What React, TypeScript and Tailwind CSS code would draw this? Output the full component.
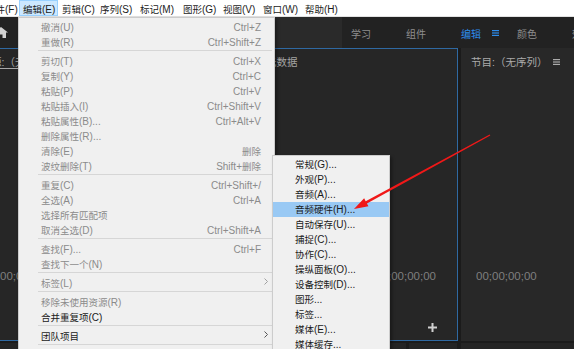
import React from 'react';

const FC = "font-['Noto_Sans_CJK_SC',sans-serif]";
const FL = "font-['Liberation_Sans',sans-serif]";
const RE = /[\u2e80-\u9fff\uff00-\uffef]+|[^\u2e80-\u9fff\uff00-\uffef]+/g;
const CJK = /[\u2e80-\u9fff\uff00-\uffef]/;

function Txt({ s, c = 'text-[9.5px]', l = 'text-[10px]' }: { s: string; c?: string; l?: string }) {
  const parts = s.match(RE) || [];
  return (
    <>
      {parts.map((p, i) => (
        <span key={i} className={CJK.test(p) ? c + ' ' + FC : l + ' ' + FL}>
          {p}
        </span>
      ))}
    </>
  );
}

type Item = { l: string; s?: string; en?: boolean; sub?: boolean } | 'sep';

const mainItems: Item[] = [
  { l: '撤消(U)', s: 'Ctrl+Z' },
  { l: '重做(R)', s: 'Ctrl+Shift+Z' },
  'sep',
  { l: '剪切(T)', s: 'Ctrl+X' },
  { l: '复制(Y)', s: 'Ctrl+C' },
  { l: '粘贴(P)', s: 'Ctrl+V' },
  { l: '粘贴插入(I)', s: 'Ctrl+Shift+V' },
  { l: '粘贴属性(B)...', s: 'Ctrl+Alt+V' },
  { l: '删除属性(R)...' },
  { l: '清除(E)', s: '删除' },
  { l: '波纹删除(T)', s: 'Shift+删除' },
  'sep',
  { l: '重复(C)', s: 'Ctrl+Shift+/' },
  { l: '全选(A)', s: 'Ctrl+A' },
  { l: '选择所有匹配项' },
  { l: '取消全选(D)', s: 'Ctrl+Shift+A' },
  'sep',
  { l: '查找(F)...', s: 'Ctrl+F' },
  { l: '查找下一个(N)' },
  'sep',
  { l: '标签(L)', sub: true },
  'sep',
  { l: '移除未使用资源(R)' },
  { l: '合并重复项(C)', en: true },
  'sep',
  { l: '团队项目', en: true, sub: true },
  'sep',
  { l: '键盘快捷键(K)...', en: true },
];

const subItems = [
  '常规(G)...',
  '外观(P)...',
  '音频(A)...',
  '音频硬件(H)...',
  '自动保存(U)...',
  '捕捉(C)...',
  '协作(C)...',
  '操纵面板(O)...',
  '设备控制(D)...',
  '图形...',
  '标签...',
  '媒体(E)...',
  '媒体缓存...',
  '内存(Y)...',
];

const menubar = [
  { t: '编辑(E)', w: 'w-[39px] pl-[3px]', hi: true },
  { t: '剪辑(C)', w: 'w-[38px] pl-[4px]' },
  { t: '序列(S)', w: 'w-[40px] pl-[4px]' },
  { t: '标记(M)', w: 'w-[43px] pl-[4px]' },
  { t: '图形(G)', w: 'w-[40px] pl-[4px]' },
  { t: '视图(V)', w: 'w-[40px] pl-[4px]' },
  { t: '窗口(W)', w: 'w-[42px] pl-[4px]' },
  { t: '帮助(H)', w: 'w-[40px] pl-[4px]' },
];

function Chevron({ color }: { color: string }) {
  return (
    <svg width="4" height="7" viewBox="0 0 4 7" className="block">
      <path d="M0.5 0.5 L3.5 3.5 L0.5 6.5" fill="none" stroke={color} strokeWidth="1" />
    </svg>
  );
}

function Hamburger({ color }: { color: string }) {
  return (
    <svg width="7" height="6" viewBox="0 0 7 6" className="block">
      <rect x="0" y="0" width="7" height="1.2" fill={color} />
      <rect x="0" y="2.4" width="7" height="1.2" fill={color} />
      <rect x="0" y="4.8" width="7" height="1.2" fill={color} />
    </svg>
  );
}

export default function App() {
  return (
    <div className="relative w-[574px] h-[349px] overflow-hidden bg-[#1b1b1b] font-['Liberation_Sans','Noto_Sans_CJK_SC',sans-serif]">
      {/* Menubar */}
      <div className="flex h-[17px] bg-white border-b border-[#e2e2e2] text-[#1b1b1b] leading-none">
        <div className="h-[16px] w-[19px] shrink-0 flex items-center">
          <span className="whitespace-nowrap ml-[-14px]">
            <Txt s="文件(F)" />
          </span>
        </div>
        {menubar.map((m, i) => (
          <div
            key={i}
            className={
              'h-[16px] flex items-center shrink-0 ' +
              m.w +
              (m.hi ? ' bg-[#cce8ff] border border-[#99d1ff]' : '')
            }
          >
            <span className="whitespace-nowrap">
              <Txt s={m.t} />
            </span>
          </div>
        ))}
      </div>

      {/* Header tab bar */}
      <div className="flex h-[31px]">
        <div className="w-[250px] shrink-0 bg-[#232323] flex items-center">
          <svg width="14" height="11" viewBox="0 0 14 11" className="ml-[-6px] block">
            <path d="M7 0 L14 5.5 L12 5.5 L12 11 L8.5 11 L8.5 7.5 L5.5 7.5 L5.5 11 L2 11 L2 5.5 L0 5.5 Z" fill="#d2d2d2" />
          </svg>
        </div>
        <div className="w-[92px] shrink-0 bg-[#2a2a2a]" />
        <div className="flex-1 min-w-0 overflow-hidden bg-[#222222] flex items-center text-[#8e8e8e] whitespace-nowrap leading-none">
          <span className="ml-[9px] shrink-0"><Txt s="学习" c="text-[10px]" /></span>
          <span className="ml-[35px] shrink-0"><Txt s="组件" c="text-[10px]" /></span>
          <span className="ml-[35px] shrink-0 text-[#2d8ceb]"><Txt s="编辑" c="text-[10px]" /></span>
          <span className="ml-[11px] shrink-0"><Hamburger color="#2d8ceb" /></span>
          <span className="ml-[18px] shrink-0"><Txt s="颜色" c="text-[10px]" /></span>
          <span className="ml-[35px] shrink-0"><Txt s="效果" c="text-[10px]" /></span>
        </div>
      </div>

      {/* Panels */}
      <div className="flex h-[293px] bg-[#1b1b1b]">
        {/* Source panel */}
        <div className="ml-[-10px] w-[468px] shrink-0 h-full border border-[#2f69a2] bg-[#262626] flex flex-col">
          <div className="h-[20px] pt-[5px] flex shrink-0 text-[#a3a3a3] leading-[14px] whitespace-nowrap">
            <div className="w-[275px] shrink-0">
              <span className="inline-block h-[15px] border-b border-[#a8a8a8]">
                <Txt s="源:（无剪辑）" c="text-[10.5px]" l="text-[10.5px]" />
              </span>
            </div>
            <div>
              <Txt s="元数据" c="text-[10.5px]" />
            </div>
          </div>
          <div className="flex-1" />
          <div className="h-[16px] shrink-0 flex items-center justify-between pl-[9px] pr-[21px] text-[#7f7f7f] text-[11.5px] leading-none">
            <span>00;00;00;00</span>
            <span>00;00;00;00</span>
          </div>
          <div className="h-[34px] shrink-0" />
          <div className="h-[16px] shrink-0 flex items-center justify-end pr-[20px]">
            <svg width="9" height="9" viewBox="0 0 9 9" className="block">
              <rect x="3.5" y="0" width="2" height="9" fill="#cfcfcf" />
              <rect x="0" y="3.5" width="9" height="2" fill="#cfcfcf" />
            </svg>
          </div>
          <div className="h-[5px] shrink-0" />
        </div>

        {/* Program panel */}
        <div className="ml-[3px] flex-1 h-full bg-[#282828] flex flex-col">
          <div className="h-[21px] pt-[6px] pl-[10px] flex shrink-0 text-[#ababab] leading-[14px] whitespace-nowrap">
            <span className="flex items-center">
              <Txt s="节目:（无序列）" c="text-[10.5px]" l="text-[10.5px]" />
              <span className="ml-[6px]"><Hamburger color="#ababab" /></span>
            </span>
          </div>
          <div className="flex-1" />
          <div className="h-[16px] shrink-0 flex items-center pl-[15px] text-[#7f7f7f] text-[11.5px] leading-none">
            <span>00;00;00;00</span>
          </div>
          <div className="h-[56px] shrink-0" />
        </div>
      </div>

      {/* Bottom strip */}
      <div className="flex h-[8px] pt-[2px] bg-[#1b1b1b]">
        <div className="w-[406px] shrink-0 bg-[#242424]" />
        <div className="ml-[3px] w-[48px] shrink-0 bg-[#242424]" />
        <div className="ml-[4px] flex-1 bg-[#242424]" />
      </div>

      {/* Edit dropdown menu */}
      <div className="absolute left-[18px] top-[17px] w-[257px] bg-[#f0f0f0] border border-[#cccccc] shadow-[2px_2px_3px_rgba(0,0,0,0.35)] leading-none">
        {mainItems.map((it, i) =>
          it === 'sep' ? (
            <div key={i} className="h-[4px] flex items-center">
              <div className="h-px flex-1 ml-[19px] mr-[2px] bg-[#d6d6d6]" />
            </div>
          ) : (
            <div
              key={i}
              className={
                'h-[15px] flex items-center pl-[22px] whitespace-nowrap ' +
                (it.en ? 'text-[#1a1a1a]' : 'text-[#8b8b8b]') +
                (it.sub ? ' pr-[6px]' : ' pr-[13px]')
              }
            >
              <span className="flex-1">
                <Txt s={it.l} />
              </span>
              {it.s && (
                <span>
                  <Txt s={it.s} />
                </span>
              )}
              {it.sub && <Chevron color={it.en ? '#555555' : '#a0a0a0'} />}
            </div>
          )
        )}
      </div>

      {/* Preferences submenu */}
      <div className="absolute left-[272px] top-[155px] w-[118px] bg-[#f0f0f0] border border-[#cccccc] pt-[1px] shadow-[2px_2px_3px_rgba(0,0,0,0.35)] leading-none text-[#1a1a1a]">
        {subItems.map((s, i) => (
          <div
            key={i}
            className={
              'h-[15px] flex items-center pl-[22px] whitespace-nowrap' + (i === 3 ? ' bg-[#99c9f4]' : '')
            }
          >
            <Txt s={s} />
          </div>
        ))}
      </div>

      {/* Red annotation arrow */}
      <svg className="absolute left-0 top-0 pointer-events-none" width="574" height="349" viewBox="0 0 574 349">
        <polygon
          points="354,209 368.45,206.25 366.92,203.44 490.29,135.53 489.71,134.47 365.68,201.16 364.15,198.35"
          fill="#f01818"
        />
      </svg>
    </div>
  );
}
